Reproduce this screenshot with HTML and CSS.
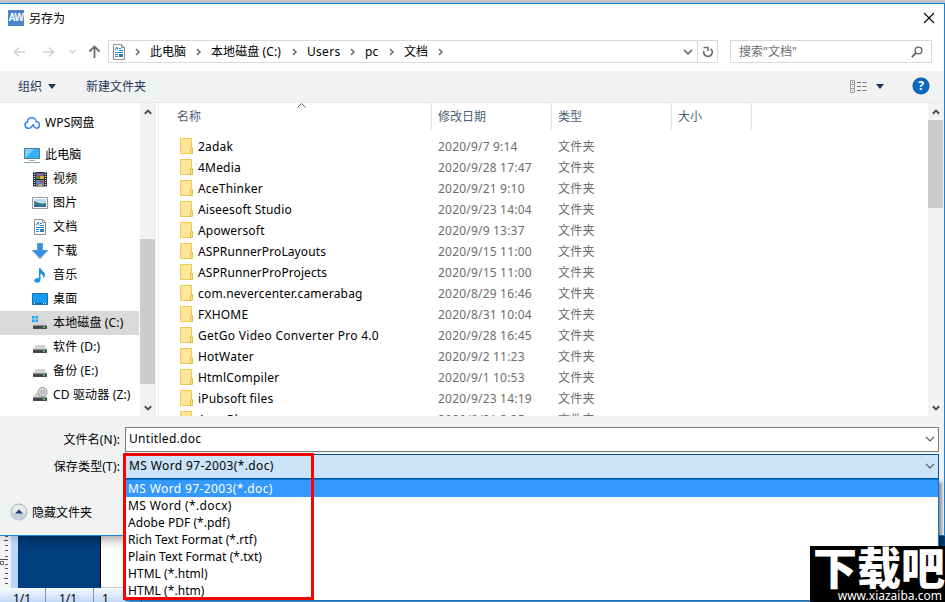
FILE: index.html
```html
<!DOCTYPE html>
<html lang="zh-CN">
<head>
    <meta charset="UTF-8">
    <meta name="viewport" content="width=device-width, initial-scale=1.0">
    <title>另存为</title>
    <link rel="stylesheet" href="styles.css">
</head>
<body>
    <svg class="sprite" width="0" height="0">
        <symbol id="folder" viewBox="0 0 14 16">
            <path d="M.5.5h11v15H.5z" fill="#ffe69a" stroke="#ecc94f"/>
            <path d="M10.5 9.5h2v6h-2z" fill="#ffe28a" stroke="#e6c045"/>
        </symbol>
        <symbol id="doc" viewBox="0 0 16 16">
            <path d="M2.5.5h8l3 3v12h-11z" fill="#fff" stroke="#8a8f94"/>
            <path d="M10.5.5v3h3" fill="none" stroke="#8a8f94"/>
            <path d="M4 6l2-3 1 3M8 4.5h2M8 6.5h4M4 8.500h8M4 10.500h3M4 12.500h3" fill="none" stroke="#1e88d8"/>
            <path d="M8 10h4v3H8z" fill="#2f7fa8"/>
        </symbol>
        <symbol id="drive" viewBox="0 0 16 16">
            <path d="M3.500 6h9L15 10H1z" fill="#d0d2d3"/>
            <path d="M1 10h14v4H1z" fill="#45484b"/>
            <path d="M1 10h14v1H1z" fill="#8b8e90"/>
            <path d="M11 11.500h2v1.500h-2z" fill="#47e052"/>
        </symbol>
        <symbol id="chevron-right" viewBox="0 0 6 8">
            <path d="M1 1l3 3-3 3" fill="none" stroke="#6b6b6b" stroke-width="1.500"/>
        </symbol>
        <symbol id="chevron-down" viewBox="0 0 10 6">
            <path d="M1 .8l4 4 4-4" fill="none" stroke="currentColor" stroke-width="1.200"/>
        </symbol>
        <symbol id="scroll-arrow" viewBox="0 0 8 6">
            <path d="M.8 4.800L4 1.600l3.200 3.200" fill="none" stroke="#505050" stroke-width="2"/>
        </symbol>
    </svg>

    <div class="backdrop">
        <div class="ruler">
            <svg width="11" height="53"><path d="M5 1.500h3M4 5.500h4M5 10.500h3M5 15.500h3M5 21.500h3M0 24.500h8M5 29.500h3M5 33.500h3M5 38.500h3M4 43.500h4M5 48.500h3" stroke="#555" fill="none"/><path d="M.5 26.500h3v3h-3z" stroke="#666" fill="none"/></svg>
        </div>
        <div class="margin-strip"></div>
        <div class="page-panel"></div>
        <div class="paper"></div>
    </div>
    <div class="statusbar">
        <span>1/1</span>
        <span>1/1</span>
        <span>1</span>
    </div>

    <div class="dialog">
        <div class="titlebar">
            <span class="logo">AW</span>
            <span class="title">另存为</span>
            <svg class="close" width="12" height="12"><path d="M1 1l10 10M11 1L1 11" stroke="#000" stroke-width="1.100"/></svg>
        </div>

        <div class="navbar">
            <div class="history">
                <svg width="13" height="12"><path d="M12 6H1.500M6 1.500L1.500 6 6 10.500" fill="none" stroke="#cfcfcf" stroke-width="1.500"/></svg>
                <svg width="13" height="12"><path d="M1 6h10.500M7 1.500L11.500 6 7 10.500" fill="none" stroke="#cfcfcf" stroke-width="1.500"/></svg>
                <svg class="recent" width="7" height="5"><path d="M.7 1l2.800 2.600L6.300 1" fill="none" stroke="#cfcfcf" stroke-width="1.300"/></svg>
                <svg width="13" height="13"><path d="M6.500 13V2M1.500 6.500l5-5 5 5" fill="none" stroke="#6e6e6e" stroke-width="1.800"/></svg>
            </div>
            <div class="address">
                <svg class="address-icon" width="16" height="16"><use href="#doc"/></svg>
                <svg class="sep" width="6" height="8"><use href="#chevron-right"/></svg>
                <span class="crumb crumb-pc">此电脑</span>
                <svg class="sep" width="6" height="8"><use href="#chevron-right"/></svg>
                <span class="crumb crumb-disk">本地磁盘 (C:)</span>
                <svg class="sep" width="6" height="8"><use href="#chevron-right"/></svg>
                <span class="crumb crumb-users">Users</span>
                <svg class="sep" width="6" height="8"><use href="#chevron-right"/></svg>
                <span class="crumb crumb-user">pc</span>
                <svg class="sep" width="6" height="8"><use href="#chevron-right"/></svg>
                <span class="crumb crumb-docs">文档</span>
                <svg class="sep" width="6" height="8"><use href="#chevron-right"/></svg>
                <svg class="drop" width="10" height="6"><path d="M1 .8l4 4 4-4" fill="none" stroke="#707070" stroke-width="1.800"/></svg>
                <span class="refresh">
                    <svg width="12" height="12"><path d="M8.500 2.800A4.200 4.200 0 1 1 2 5M1.500 1.500H6V5" fill="none" stroke="#707070" stroke-width="1.600"/></svg>
                </span>
            </div>
            <div class="search">
                <span>搜索"文档"</span>
                <svg width="12" height="12"><circle cx="7.500" cy="4.500" r="3.400" fill="none" stroke="#666" stroke-width="1.400"/><path d="M5 7L.8 11.200" stroke="#666" stroke-width="1.800"/></svg>
            </div>
        </div>

        <div class="toolbar">
            <span>组织</span>
            <i class="caret"></i>
            <span class="new-folder">新建文件夹</span>
            <svg class="view" width="17" height="13"><path d="M.5.5h4v12h-4zM.5 4.500h4M.5 8.500h4" fill="#fff" stroke="#999"/><path d="M7 2.500h4M12.500 2.500h4M7 6.500h4M12.500 6.500h4M7 10.500h4M12.500 10.500h4" stroke="#777"/><path d="M2 2h1v1H2z" fill="#333"/><path d="M2 6h1v1H2z" fill="#2a8ad8"/><path d="M2 10h1v1H2z" fill="#c33"/></svg>
            <i class="caret caret-view"></i>
            <span class="help">?</span>
        </div>

        <div class="content">
            <div class="tree">
                <div class="node node-wps">
                    <svg width="16" height="16"><path d="M5.500 13.200H4a3.100 3.100 0 0 1-.6-6.100C3.600 4.200 5.600 2.800 7.800 2.800s4 1.400 4.400 4a3.200 3.200 0 0 1 .2 6.400c-1.800 0-2.500-1.500-3.600-3.200M5.500 13.200c2 0 2.500-3.700 5-3.700" fill="none" stroke="#3d82f5" stroke-width="1.600"/></svg>
                    <span>WPS网盘</span>
                </div>
                <div class="node node-pc">
                    <svg width="16" height="16"><path d="M.5 1.500h15v10H.5z" fill="#38b0f5" stroke="#4a7c98"/><path d="M1 11l9-9H1z" fill="#7fd0fb"/><path d="M5 13.500h6" stroke="#9bb8c9"/><path d="M0 15.500h16" stroke="#8aa5b8"/></svg>
                    <span>此电脑</span>
                </div>
                <div class="node">
                    <svg width="16" height="16"><path d="M1 1h14v14.500H1z" fill="#292929"/><path d="M2.500 1v15M13.500 1v15" stroke="#ddd" stroke-width="1.300" stroke-dasharray="1 1"/><path d="M4 2h8v6H4z" fill="#486fc0"/><path d="M4 9h8v6H4z" fill="#5c83c8"/><path d="M6 3h3v3H6z" fill="#da3b2c"/><path d="M8 5h4v3H8zM7 13h3v2H7z" fill="#d8b42e"/><path d="M4 6h4v2H4z" fill="#3f8e46"/><path d="M8 10h3v2H8z" fill="#c84830"/></svg>
                    <span>视频</span>
                </div>
                <div class="node">
                    <svg width="16" height="16"><path d="M.5 2.500h15v11H.5z" fill="#fff" stroke="#999"/><path d="M2 4h12v8H2z" fill="#b9dff3"/><path d="M2 6c4 2 8 3 12 2v2H2z" fill="#3a7f83"/><path d="M2 10h12v2H2z" fill="#2d69a0"/></svg>
                    <span>图片</span>
                </div>
                <div class="node">
                    <svg width="16" height="16"><use href="#doc"/></svg>
                    <span>文档</span>
                </div>
                <div class="node">
                    <svg width="16" height="16"><path d="M5.500.5h5v7h5L8 15.500.5 7.500h5z" fill="#3393e6" stroke="#5a95cc"/></svg>
                    <span>下载</span>
                </div>
                <div class="node">
                    <svg width="16" height="16"><path d="M7 1h1.500c.5 3 4.500 3.500 4.500 7 0 1.500-.5 2.500-1.500 3.500C12 8 9.500 7 8.500 6.500V13c0 1.500-1.500 2.700-3.500 2.700S2.300 14.800 2.300 13.500 4 11 7 11z" fill="#1494e0"/></svg>
                    <span>音乐</span>
                </div>
                <div class="node">
                    <svg width="16" height="16"><path d="M.5 2.500h15v11H.5z" fill="#149bf0" stroke="#1470b5"/><path d="M1 12.500h14" stroke="#0c5fa0"/><path d="M2 12.500h2M11 12.500h3" stroke="#fff" stroke-dasharray="1 1"/></svg>
                    <span>桌面</span>
                </div>
                <div class="node selected">
                    <svg width="16" height="16"><use href="#drive"/><path d="M0 0h7v8H0z" fill="#d9d9d9"/><path d="M0 1h2.500v2.500H0zM3.500 1H6v2.500H3.500zM0 4.500h2.500V7H0zM3.500 4.500H6V7H3.500z" fill="#10a8ee"/></svg>
                    <span>本地磁盘 (C:)</span>
                </div>
                <div class="node">
                    <svg width="16" height="16"><use href="#drive"/></svg>
                    <span>软件 (D:)</span>
                </div>
                <div class="node">
                    <svg width="16" height="16"><use href="#drive"/></svg>
                    <span>备份 (E:)</span>
                </div>
                <div class="node">
                    <svg width="16" height="16"><use href="#drive"/><circle cx="10.500" cy="5" r="4.500" fill="#d5d7d9" stroke="#92969a"/><circle cx="10.500" cy="5" r="1.500" fill="#fff" stroke="#8a8d90"/></svg>
                    <span>CD 驱动器 (Z:)</span>
                </div>
            </div>
            <div class="scrollbar scrollbar-tree">
                <svg width="8" height="6"><use href="#scroll-arrow"/></svg>
                <div class="thumb"></div>
                <svg class="flip" width="8" height="6"><use href="#scroll-arrow"/></svg>
            </div>

            <div class="files">
                <div class="files-header">
                    <span>名称</span>
                    <span>修改日期</span>
                    <span>类型</span>
                    <span>大小</span>
                    <svg class="sort" width="9" height="5"><path d="M.5 4.500l4-4 4 4" fill="none" stroke="#666"/></svg>
                </div>
                <div class="file"><svg width="14" height="16"><use href="#folder"/></svg><b>2adak</b><span>2020/9/7 9:14</span><span>文件夹</span></div>
                <div class="file"><svg width="14" height="16"><use href="#folder"/></svg><b>4Media</b><span>2020/9/28 17:47</span><span>文件夹</span></div>
                <div class="file"><svg width="14" height="16"><use href="#folder"/></svg><b>AceThinker</b><span>2020/9/21 9:10</span><span>文件夹</span></div>
                <div class="file"><svg width="14" height="16"><use href="#folder"/></svg><b>Aiseesoft Studio</b><span>2020/9/23 14:04</span><span>文件夹</span></div>
                <div class="file"><svg width="14" height="16"><use href="#folder"/></svg><b>Apowersoft</b><span>2020/9/9 13:37</span><span>文件夹</span></div>
                <div class="file"><svg width="14" height="16"><use href="#folder"/></svg><b class="tight">ASPRunnerProLayouts</b><span>2020/9/15 11:00</span><span>文件夹</span></div>
                <div class="file"><svg width="14" height="16"><use href="#folder"/></svg><b class="tight">ASPRunnerProProjects</b><span>2020/9/15 11:00</span><span>文件夹</span></div>
                <div class="file"><svg width="14" height="16"><use href="#folder"/></svg><b>com.nevercenter.camerabag</b><span>2020/8/29 16:46</span><span>文件夹</span></div>
                <div class="file"><svg width="14" height="16"><use href="#folder"/></svg><b>FXHOME</b><span>2020/8/31 10:04</span><span>文件夹</span></div>
                <div class="file"><svg width="14" height="16"><use href="#folder"/></svg><b class="wide">GetGo Video Converter Pro 4.0</b><span>2020/9/28 16:45</span><span>文件夹</span></div>
                <div class="file"><svg width="14" height="16"><use href="#folder"/></svg><b>HotWater</b><span>2020/9/2 11:23</span><span>文件夹</span></div>
                <div class="file"><svg width="14" height="16"><use href="#folder"/></svg><b>HtmlCompiler</b><span>2020/9/1 10:53</span><span>文件夹</span></div>
                <div class="file"><svg width="14" height="16"><use href="#folder"/></svg><b>iPubsoft files</b><span>2020/9/23 14:19</span><span>文件夹</span></div>
                <div class="file"><svg width="14" height="16"><use href="#folder"/></svg><b>AppsPlay</b><span>2020/9/21 8:35</span><span>文件夹</span></div>
            </div>
            <div class="scrollbar scrollbar-files">
                <svg width="8" height="6"><use href="#scroll-arrow"/></svg>
                <div class="thumb"></div>
                <svg class="flip" width="8" height="6"><use href="#scroll-arrow"/></svg>
            </div>
        </div>

        <div class="form">
            <div class="field">
                <label>文件名(N):</label>
                <div class="combo"><span>Untitled.doc</span><svg width="10" height="6"><use href="#chevron-down"/></svg></div>
            </div>
            <div class="field">
                <label>保存类型(T):</label>
                <div class="combo combo-open">
                    <span>MS Word 97-2003(*.doc)</span><svg width="10" height="6"><use href="#chevron-down"/></svg>
                    <ul class="options">
                        <li class="active">MS Word 97-2003(*.doc)</li>
                        <li>MS Word (*.docx)</li>
                        <li class="tight">Adobe PDF (*.pdf)</li>
                        <li class="tight">Rich Text Format (*.rtf)</li>
                        <li class="tight">Plain Text Format (*.txt)</li>
                        <li class="tight">HTML (*.html)</li>
                        <li class="tight">HTML (*.htm)</li>
                    </ul>
                </div>
            </div>
            <div class="hide-folders">
                <svg width="18" height="18"><circle cx="9" cy="9" r="8" fill="#e6e9ee" stroke="#a9afba"/><path d="M2 10a7 7 0 0 0 14 0z" fill="#c9d0db"/><path d="M5 10.500L9 6.500l4 4z" fill="#1c3f7c"/></svg>
                <span>隐藏文件夹</span>
            </div>
        </div>
    </div>

    <div class="highlight"></div>
    <div class="watermark">
        <strong>下载吧</strong>
        <span>www.xiazaiba.com</span>
    </div>
</body>
</html>
```
FILE: styles.css
```css
* {
    box-sizing: border-box;
}

body {
    position: relative;
    margin: 0;
    width: 945px;
    height: 602px;
    overflow: hidden;
    background: #c9cbd2;
    color: #000;
    font: 12px/16px "Noto Sans", "Noto Sans CJK SC", sans-serif;
}

svg {
    display: block;
    flex: none;
}

.sprite {
    position: absolute;
}

/* window behind the dialog */
.backdrop {
    position: absolute;
    top: 535px;
    left: 0;
    display: flex;
    width: 945px;
    height: 53px;
    background: #003e7e;
}

.ruler {
    width: 11px;
    background: #f4f4f4;
}

.margin-strip {
    width: 7px;
    background: #bdd5fb;
}

.page-panel {
    width: 83px;
    margin-bottom: 1px;
    border-right: 1px solid #000;
    background: linear-gradient(#003568, #003e7e 15px);
}

.paper {
    width: 838px;
    border-bottom: 1px solid #ccc;
    background: linear-gradient(#d5d5d5, #fff 15px);
}

.statusbar {
    position: absolute;
    top: 588px;
    left: 0;
    display: flex;
    width: 945px;
    height: 14px;
    overflow: hidden;
    background: linear-gradient(#f5f9ff, #c3daf7);
}

.statusbar span {
    width: 48px;
    padding: 3px 0 0 13px;
    border-right: 1px solid #8a9099;
}

.statusbar span:first-child {
    width: 46px;
}

.statusbar span:last-child {
    padding-left: 8px;
}

/* dialog */
.dialog {
    position: relative;
    display: flex;
    flex-direction: column;
    width: 945px;
    height: 533px;
    margin-top: 3px;
    border: 1px solid #1a82d2;
    border-left: 0;
    background: #fff;
    box-shadow: 0 2px 8px rgba(0, 0, 0, 0.2);
}

.titlebar {
    display: flex;
    align-items: center;
    height: 36px;
    padding: 0 9px 8px 8px;
}

.title {
    padding-top: 2px;
}

.logo {
    width: 16px;
    height: 16px;
    margin-right: 5px;
    background: #4b83c7;
    color: #fff;
    font: bold 10px/16px "Liberation Sans", sans-serif;
    letter-spacing: -0.5px;
    text-align: center;
}

.close {
    margin-left: auto;
}

.navbar {
    display: flex;
    align-items: center;
    height: 23px;
    padding-right: 12px;
}

.history {
    display: flex;
    align-items: center;
    width: 108px;
    padding-left: 13px;
    gap: 16px;
}

.history .recent {
    margin: 0 -4px 0 -2px;
}

.address {
    display: flex;
    align-items: center;
    width: 610px;
    height: 23px;
    padding-left: 2px;
    border: 1px solid #d9d9d9;
}

.address .sep {
    margin-left: 6px;
}

.address .address-icon + .sep {
    margin-left: 8px;
}

.crumb {
    margin-left: 9px;
    white-space: nowrap;
}

.crumb-pc {
    width: 40px;
}

.crumb-disk {
    width: 75px;
    letter-spacing: 0.1px;
}

.crumb-users {
    width: 37px;
    letter-spacing: 0.3px;
}

.crumb-user {
    width: 18px;
}

.crumb-docs {
    width: 28px;
}

.drop {
    margin-left: auto;
}

.refresh {
    display: flex;
    align-items: center;
    justify-content: center;
    width: 20px;
    height: 21px;
    margin-left: 4px;
    border-left: 1px solid #d9d9d9;
}

.search {
    display: flex;
    align-items: center;
    justify-content: space-between;
    width: 202px;
    height: 23px;
    margin-left: 12px;
    padding: 0 8px;
    border: 1px solid #d9d9d9;
    color: #6d6d6d;
}

.toolbar {
    display: flex;
    align-items: center;
    height: 32px;
    margin-top: 8px;
    padding: 0 15px 1px 18px;
    border-bottom: 1px solid #e7eaea;
    background: #f1f3f3;
    color: #1e395b;
}

.toolbar span:not(.help) {
    padding-top: 1px;
}

.caret {
    margin-left: 6px;
    border: 4px solid transparent;
    border-top: 5px solid #1e395b;
    border-bottom: 0;
}

.new-folder {
    margin-left: 30px;
}

.view {
    margin-left: auto;
}

.caret-view {
    margin: 0 29px 0 9px;
}

.help {
    width: 16px;
    height: 16px;
    border-radius: 50%;
    background: #0a68c4;
    box-shadow: 0 0 0 0.5px #07468a;
    color: #fff;
    font-weight: bold;
    text-align: center;
}

.content {
    display: flex;
    height: 313px;
}

.tree {
    width: 140px;
    padding-top: 8px;
}

.node {
    display: flex;
    align-items: center;
    gap: 5px;
    width: 139px;
    height: 24px;
    padding-left: 32px;
    letter-spacing: 0.15px;
    white-space: nowrap;
}

.node-wps {
    margin-bottom: 8px;
    padding-left: 24px;
}

.node-pc {
    padding-left: 24px;
}

.node.selected {
    background: #d9d9d9;
}

.scrollbar {
    display: flex;
    flex-direction: column;
    align-items: center;
    width: 16px;
    padding: 6px 1px 5px 0;
    background: #f1f3f3;
}

.thumb {
    width: 15px;
    background: #cdcdcd;
}

.flip {
    margin-top: auto;
    transform: rotate(180deg);
}

.scrollbar-tree .thumb {
    height: 145px;
    margin-top: 124px;
}

.scrollbar-files .thumb {
    height: 88px;
    margin-top: 5px;
}

.files {
    width: 770px;
    margin-left: 2px;
    overflow: hidden;
    border-left: 1px solid #f0f0f0;
}

.files-header {
    position: relative;
    display: grid;
    grid-template-columns: 273px 120px 120px 80px;
    height: 27px;
    margin-bottom: 6px;
    color: #4c607a;
}

.files-header span {
    padding: 6px 0 0 6px;
    border-right: 1px solid #e5e5e5;
}

.files-header span:first-child {
    padding-left: 18px;
}

.sort {
    position: absolute;
    top: 0;
    left: 138px;
}

.file {
    display: grid;
    grid-template-columns: 18px 240px 120px 120px;
    align-items: center;
    height: 21px;
    padding-left: 21px;
    color: #6d6d6d;
    letter-spacing: 0.2px;
    white-space: nowrap;
}

.file svg {
    margin-bottom: 1px;
}

.file b {
    color: #000;
    font-weight: normal;
}

.file .tight {
    letter-spacing: 0.1px;
}

.file .wide {
    letter-spacing: 0.3px;
}

.form {
    flex: 1;
    padding: 11px 5px 0 0;
    background: #f1f3f3;
}

.field {
    display: flex;
    align-items: center;
    height: 25px;
    margin-bottom: 2px;
}

.field label {
    width: 120px;
    margin-right: 5px;
    letter-spacing: 0.15px;
    text-align: right;
}

.combo {
    position: relative;
    display: flex;
    flex: 1;
    align-items: center;
    justify-content: space-between;
    height: 25px;
    padding: 0 3px 1px 3px;
    border: 1px solid #7a7a7a;
    background: #fff;
    color: #000;
    letter-spacing: 0.3px;
}

.combo svg {
    color: #555;
}

.combo-open {
    border-color: #005499;
    background: #cce4f7;
    letter-spacing: 0.38px;
}

.options {
    position: absolute;
    top: 24px;
    left: -1px;
    right: -1px;
    z-index: 2;
    height: 122px;
    margin: 0;
    padding: 0;
    border: 1px solid #0078d7;
    background: #fff;
    box-shadow: 3px 3px 3px rgba(0, 0, 0, 0.4);
    list-style: none;
}

.options li {
    height: 17px;
    padding-left: 2px;
    line-height: 17px;
}

.options .tight {
    letter-spacing: 0.05px;
}

.options .active {
    background: #3399ff;
    color: #fff;
}

.hide-folders {
    display: flex;
    align-items: center;
    gap: 4px;
    margin-top: 24px;
    padding-left: 10px;
}

.hide-folders span {
    padding-top: 2px;
}

/* red marker around the file types */
.highlight {
    position: absolute;
    top: 453px;
    left: 123px;
    z-index: 3;
    width: 191px;
    height: 147px;
    border: 3px solid #f00;
}

.watermark {
    position: absolute;
    top: 546px;
    left: 810px;
    z-index: 4;
    width: 135px;
    height: 56px;
    overflow: hidden;
    background: #000;
    color: #fff;
    text-align: right;
}

.watermark strong {
    display: block;
    font: 900 44px/41px "Noto Sans CJK SC", sans-serif;
}

.watermark span {
    display: block;
    padding-right: 3px;
    font-size: 12px;
    line-height: 18px;
}
```
